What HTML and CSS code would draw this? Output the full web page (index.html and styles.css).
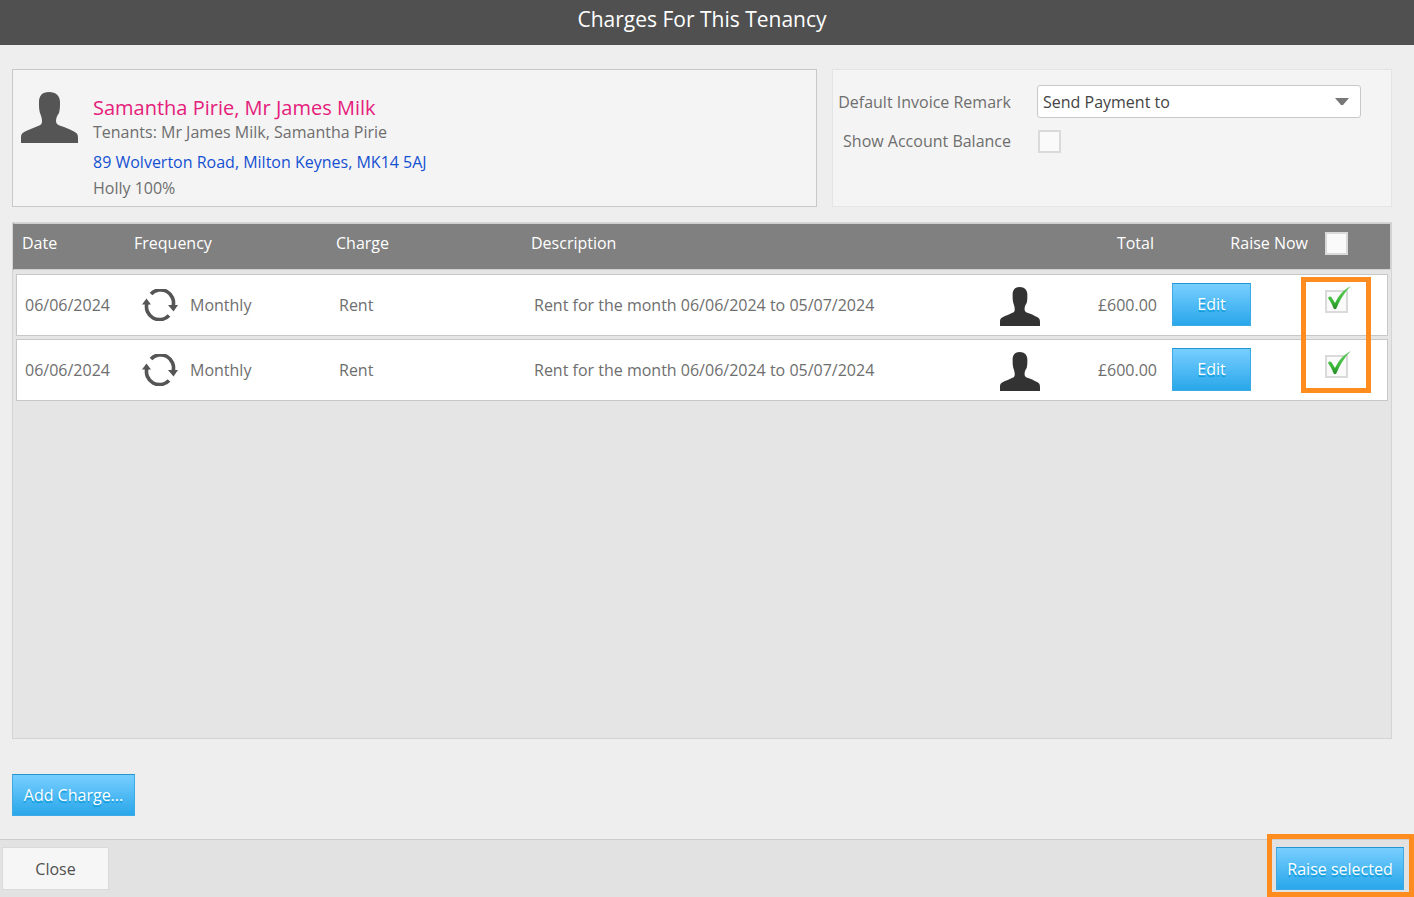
FILE: index.html
```html
<!DOCTYPE html>
<html lang="en">
<head>
<meta charset="utf-8">
<meta name="viewport" content="width=device-width, initial-scale=1">
<title>Charges For This Tenancy</title>
<link rel="stylesheet" href="styles.css">
</head>
<body>
<svg class="sprite" aria-hidden="true">
  <symbol id="person" viewBox="0 0 57 51" preserveAspectRatio="none">
    <path d="M28 0C21 0 18 4 18 10C18 15 18 17 19 21C20 24 21 26 21 29C21 32 20 33 17 34C13 36 9 37 5 39C1 41 0 42 0 46V51H57V46C57 42 56 41 52 39C48 37 44 35 40 34C37 33 35 32 35 29C35 26 36 24 38 21C39 17 39 14 39 10C39 4 35 0 28 0Z"/>
  </symbol>
  <symbol id="cycle" viewBox="0 0 36 32">
    <path d="M9 5A13 13 0 0 1 31 17.500M27 26.500A13 13 0 0 1 5 14" fill="none" stroke="currentColor" stroke-width="3.600"/>
    <path d="M26 16L36 16L31.500 22.500ZM0 15.500L4.500 9.500L9 15.500Z"/>
  </symbol>
  <symbol id="tick" viewBox="0 0 26 26">
    <path d="M3 12C4 10 6 10 7 12L10 17C14 9 18 4 26 0C20 6 16 12 12 21C11 24 9 24 8 21C7 18 5 15 3 12Z" fill="url(#tick-green)"/>
  </symbol>
  <linearGradient id="tick-green" x1="0" y1="0" x2="0" y2="1">
    <stop offset="0" stop-color="#6cc868"/>
    <stop offset="0.600" stop-color="#3fbc3c"/>
    <stop offset="1" stop-color="#238a22"/>
  </linearGradient>
</svg>
<header class="titlebar"><h1>Charges For This Tenancy</h1></header>
<main class="content">
  <div class="summary">
    <section class="card tenancy">
      <svg class="avatar"><use href="#person"/></svg>
      <div>
        <h2 class="names">Samantha Pirie, Mr James Milk</h2>
        <p class="line">Tenants: Mr James Milk, Samantha Pirie</p>
        <a class="address" href="#">89 Wolverton Road, Milton Keynes, MK14 5AJ</a>
        <p class="line">Holly 100%</p>
      </div>
    </section>
    <section class="card options">
      <label for="remark">Default Invoice Remark</label>
      <div class="picker">
        <select id="remark"><option>Send Payment to</option></select>
        <svg class="arrow" viewBox="0 0 14 7"><path d="M0 0H14L8 7H6Z"/></svg>
      </div>
      <label for="balance">Show Account Balance</label>
      <input class="box" type="checkbox" id="balance">
    </section>
  </div>
  <section class="panel">
    <table class="charges">
      <thead>
        <tr>
          <th>Date</th><th>Frequency</th><th>Charge</th><th class="wide">Description</th><th class="amount">Total</th>
          <th class="raise-all"><label for="all">Raise Now</label><input class="box" type="checkbox" id="all"></th>
        </tr>
      </thead>
      <tbody>
        <tr>
          <td>06/06/2024</td>
          <td class="frequency"><svg class="cycle"><use href="#cycle"/></svg>Monthly</td>
          <td>Rent</td>
          <td>Rent for the month 06/06/2024 to 05/07/2024</td>
          <td><svg class="payer"><use href="#person"/></svg></td>
          <td class="amount">£600.00</td>
          <td class="edit"><button class="button" type="button">Edit</button></td>
          <td class="raise"><span class="ticked"><input class="box" type="checkbox" aria-label="Raise now" checked><svg class="tick"><use href="#tick"/></svg></span></td>
        </tr>
        <tr>
          <td>06/06/2024</td>
          <td class="frequency"><svg class="cycle"><use href="#cycle"/></svg>Monthly</td>
          <td>Rent</td>
          <td>Rent for the month 06/06/2024 to 05/07/2024</td>
          <td><svg class="payer"><use href="#person"/></svg></td>
          <td class="amount">£600.00</td>
          <td class="edit"><button class="button" type="button">Edit</button></td>
          <td class="raise"><span class="ticked"><input class="box" type="checkbox" aria-label="Raise now" checked><svg class="tick"><use href="#tick"/></svg></span></td>
        </tr>
      </tbody>
    </table>
    <div class="highlight highlight-ticks"></div>
  </section>
  <button class="button add" type="button">Add Charge...</button>
</main>
<footer class="footer">
  <button class="close" type="button">Close</button>
  <div class="submit">
    <button class="button" type="button">Raise selected</button>
    <div class="highlight highlight-submit"></div>
  </div>
</footer>
</body>
</html>
```
FILE: styles.css
```css
* { box-sizing: border-box; }
body {
  margin: 0;
  min-height: 100vh;
  display: flex;
  flex-direction: column;
  background: #eee;
  color: #6e6e6e;
  font: 16px/24px "Open Sans", "Noto Sans", sans-serif;
}
h1, h2, p { margin: 0; font-weight: 400; }
button, select, input { font: inherit; margin: 0; }
.sprite { position: absolute; width: 0; height: 0; }
.titlebar {
  height: 45px;
  padding: 4px 10px 0 0;
  background: #505050;
  color: #fff;
  text-align: center;
}
.titlebar h1 { font-size: 21px; line-height: 30px; }
.content {
  flex: 1;
  display: flex;
  flex-direction: column;
  padding: 24px 22px 23px 12px;
}
.summary { display: grid; grid-template-columns: 23fr 16fr; gap: 15px; }
.card { height: 138px; border: 1px solid #c8c8c8; background: #f4f4f4; }
.tenancy { display: flex; gap: 15px; padding: 22px 8px 0; }
.avatar { width: 57px; height: 51px; fill: #555; }
.names { color: #e5207b; font-size: 20px; line-height: 28px; padding-top: 2px; }
.address { display: block; margin: 6px 0 0; color: #1450d2; text-decoration: none; line-height: 28px; }
.line { line-height: 20px; }
.address + .line { line-height: 24px; }
.options {
  display: grid;
  grid-template-columns: 178px 324px;
  grid-template-rows: 33px 24px;
  gap: 11px 26px;
  align-items: center;
  padding-top: 15px;
  border-color: #e4e4e4;
}
.options label { text-align: right; }
.picker { position: relative; }
.picker select {
  appearance: none;
  display: block;
  width: 100%;
  height: 33px;
  padding: 0 5px;
  border: 1px solid #c8c8c8;
  border-radius: 3px;
  background: #fff;
  color: #444;
}
.arrow { position: absolute; right: 12px; top: 13px; width: 14px; height: 7px; fill: #777; pointer-events: none; }
.box {
  appearance: none;
  display: block;
  width: 23px;
  height: 23px;
  border: 2px solid #dadada;
  background: #fafafa;
}
.options .box { margin-left: 1px; }
.panel {
  position: relative;
  flex: 1;
  margin: 15px 0 35px;
  border: 1px solid #d4d4d4;
  background: #e5e5e5;
}
.charges, .charges thead, .charges tbody { display: block; }
.charges tr {
  display: grid;
  grid-template-columns: 112px 202px 195px 1fr 63px 94px 94px 100px;
  align-items: center;
}
.charges th, .charges td { padding: 0; font-weight: 400; text-align: left; white-space: nowrap; }
.charges thead tr {
  height: 47px;
  padding: 0 42px 7px 8px;
  border: 1px solid #d0d0d0;
  border-left-color: #808080;
  background: #808080;
  color: #fff;
}
.charges .wide { grid-column: span 2; }
.charges .amount { text-align: right; }
.charges .raise-all { grid-column: span 2; display: flex; justify-content: flex-end; gap: 17px; }
.raise-all .box { margin-top: 1px; }
.charges tbody { padding: 4px 3px; }
.charges tbody tr {
  height: 62px;
  margin-bottom: 3px;
  padding: 0 36px 0 8px;
  border: 1px solid #c8c8c8;
  background: #fff;
}
.charges .frequency { display: flex; align-items: center; gap: 12px; padding-left: 5px; }
.cycle { width: 36px; height: 32px; fill: #555; color: #555; }
.payer { display: block; width: 40px; height: 39px; fill: #333; margin-top: 2px; }
.charges .edit { padding: 0 0 2px 15px; }
.charges .raise { display: flex; justify-content: flex-end; padding-bottom: 8px; }
.ticked { position: relative; width: 26px; }
.tick { position: absolute; left: 0; top: -4px; width: 26px; height: 26px; pointer-events: none; }
.button {
  display: block;
  height: 43px;
  padding: 0 12px;
  border: 1px solid #3eaae4;
  border-top-color: #2294d4;
  background: linear-gradient(#78ceff, #29a7ea);
  color: #fff;
  text-shadow: 0 2px 1px #0a9ad8;
}
.edit .button { width: 79px; }
.add { width: 123px; height: 42px; padding: 0; }
.footer {
  display: flex;
  justify-content: space-between;
  padding: 7px 10px 7px 2px;
  border-top: 1px solid #ccc;
  background: #e2e2e2;
}
.close { width: 107px; height: 43px; border: 1px solid #dadada; background: #f6f6f6; color: #505050; }
.submit { position: relative; }
.submit .button { width: 128px; padding: 0; }
.highlight { position: absolute; border: 5px solid #ff8c1e; pointer-events: none; }
.highlight-ticks { right: 20px; top: 54px; width: 70px; height: 116px; }
.highlight-submit { inset: -13px -10px -7px -9px; }
```
